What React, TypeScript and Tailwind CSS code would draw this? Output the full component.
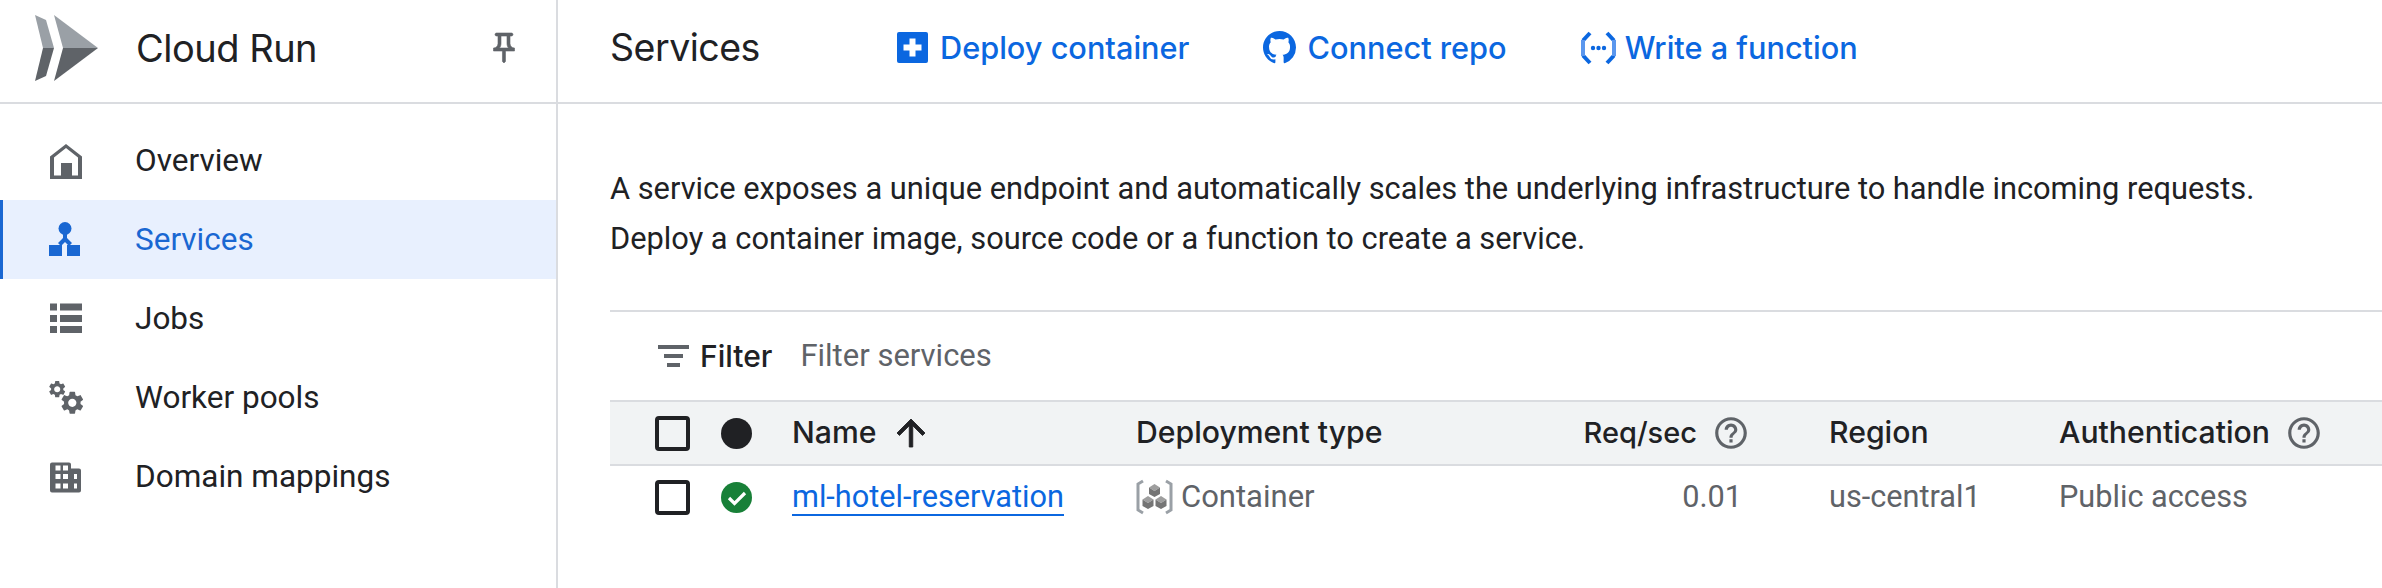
const gear = "M19.14 12.94c.04-.3.06-.61.06-.94 0-.32-.02-.64-.07-.94l2.03-1.58c.18-.14.23-.41.12-.61l-1.92-3.32c-.12-.22-.37-.29-.59-.22l-2.39.96c-.5-.38-1.03-.7-1.62-.94l-.36-2.54c-.04-.24-.24-.41-.48-.41h-3.84c-.24 0-.43.17-.47.41l-.36 2.54c-.59.24-1.13.57-1.62.94l-2.39-.96c-.22-.08-.47 0-.59.22L2.74 8.87c-.12.21-.08.47.12.61l2.03 1.58c-.05.3-.09.63-.09.94s.02.64.07.94l-2.03 1.58c-.18.14-.23.41-.12.61l1.92 3.32c.12.22.37.29.59.22l2.39-.96c.5.38 1.03.7 1.62.94l.36 2.54c.05.24.24.41.48.41h3.84c.24 0 .44-.17.47-.41l.36-2.54c.59-.24 1.13-.56 1.62-.94l2.39.96c.22.08.47 0 .59-.22l1.92-3.32c.12-.22.07-.47-.12-.61l-2.01-1.58zM12 15.6c-1.98 0-3.6-1.62-3.6-3.6s1.62-3.6 3.6-3.6 3.6 1.62 3.6 3.6-1.62 3.6-3.6 3.6z";

const Logo = () => (
  <svg width="70" height="70" viewBox="30 13 70 70" className="shrink-0">
    <path d="M35 15 46 20 54 48H43Z" fill="#9aa0a6" />
    <path d="M43 48H54L46 76 35 81Z" fill="#5f6368" />
    <path d="M54 15 98 48H63Z" fill="#9aa0a6" />
    <path d="M63 48H98L54 81Z" fill="#5f6368" />
  </svg>
);

const HomeIcon = () => (
  <svg width="36" height="36" viewBox="0 0 36 36">
    <path fillRule="evenodd" fill="#5f6368" d="M17 1 33 13.5V36H1V13.5ZM17 5 5 14.5V32.5H12V20H23V32.5H29V14.5Z" />
  </svg>
);

const ServicesIcon = () => (
  <svg width="36" height="36" viewBox="0 0 36 36" fill="#1967d2">
    <circle cx="16" cy="6.5" r="6.5" />
    <path d="M14 11h4v5l5 5-3 3-4-4-4 4-3-3 5-5z" />
    <rect x="0" y="23" width="13" height="11" />
    <rect x="18" y="23" width="13" height="11" />
  </svg>
);

const JobsIcon = () => (
  <svg width="36" height="36" viewBox="0 0 36 36" fill="#5f6368">
    <rect x="1" y="2.5" width="7" height="7" />
    <rect x="11" y="2.5" width="22" height="7" />
    <rect x="1" y="14" width="7" height="7" />
    <rect x="11" y="14" width="22" height="7" />
    <rect x="1" y="25" width="7" height="7" />
    <rect x="11" y="25" width="22" height="7" />
  </svg>
);

const WorkerIcon = () => (
  <svg width="36" height="36" viewBox="0 0 36 36" fill="#5f6368">
    <path d={gear} transform="translate(-2 -1) scale(0.85)" />
    <path d={gear} transform="translate(9.5 9) scale(1.15)" />
  </svg>
);

const DomainIcon = () => (
  <svg width="36" height="36" viewBox="0 0 36 36">
    <path fill="#5f6368" d="M3 3.5H20Q22 3.5 22 5.5V9.5H30Q32 9.5 32 11.5V31.5Q32 33.5 30 33.5H3Q1 33.5 1 31.5V5.5Q1 3.5 3 3.5Z" />
    <g fill="#fff">
      <rect x="6.5" y="6.5" width="5" height="5" />
      <rect x="14" y="6.5" width="5" height="5" />
      <rect x="6.5" y="15" width="5" height="5" />
      <rect x="14" y="15" width="5" height="5" />
      <rect x="6.5" y="24.5" width="5" height="5" />
      <rect x="14" y="24.5" width="5" height="5" />
      <rect x="25" y="15" width="3" height="5" />
      <rect x="25" y="24.5" width="3" height="5" />
    </g>
  </svg>
);

const PinIcon = () => (
  <svg width="36" height="36" viewBox="0 0 24 24" fill="#5f6368" stroke="#5f6368" strokeWidth="0.4">
    <path d="M14 4v5c0 1.12.37 2.16 1 3H9c.65-.86 1-1.9 1-3V4h4m3-2H7c-.55 0-1 .45-1 1s.45 1 1 1h1v5c0 1.66-1.34 3-3 3v2h5.97v7l1 1 1-1v-7H19v-2c-1.66 0-3-1.34-3-3V4h1c.55 0 1-.45 1-1s-.45-1-1-1z" />
  </svg>
);

const PlusBox = () => (
  <svg width="31" height="31" viewBox="0 0 31 31">
    <rect width="31" height="31" rx="2" fill="#0b67e0" />
    <path d="M12.5 6.5h6v6h6v6h-6v6h-6v-6h-6v-6h6z" fill="#fff" />
  </svg>
);

const GithubIcon = () => (
  <svg width="33" height="33" viewBox="0 0 16 16" fill="#0b67e0">
    <path d="M8 0C3.58 0 0 3.58 0 8c0 3.54 2.29 6.53 5.47 7.59.4.07.55-.17.55-.38 0-.19-.01-.82-.01-1.49-2.01.37-2.53-.49-2.69-.94-.09-.23-.48-.94-.82-1.13-.28-.15-.68-.52-.01-.53.63-.01 1.08.58 1.23.82.72 1.21 1.87.87 2.33.66.07-.52.28-.87.51-1.07-1.78-.2-3.64-.89-3.64-3.95 0-.87.31-1.59.82-2.15-.08-.2-.36-1.02.08-2.12 0 0 .67-.21 2.2.82.64-.18 1.32-.27 2-.27.68 0 1.36.09 2 .27 1.53-1.04 2.2-.82 2.2-.82.44 1.1.16 1.92.08 2.12.51.56.82 1.27.82 2.15 0 3.07-1.87 3.75-3.65 3.95.29.25.54.73.54 1.48 0 1.07-.01 1.93-.01 2.2 0 .21.15.46.55.38A8.013 8.013 0 0016 8c0-4.42-3.58-8-8-8z" />
  </svg>
);

const FunctionIcon = () => (
  <svg width="38" height="36" viewBox="0 0 38 36" fill="none" strokeWidth="4">
    <path d="M11 3 4 10.5" stroke="#0b67e0" />
    <path d="M4 25.5 11 33" stroke="#0b67e0" />
    <path d="M4 10V26" stroke="#5b97ee" />
    <path d="M28 3 35 10.5" stroke="#0b67e0" />
    <path d="M35 25.5 28 33" stroke="#0b67e0" />
    <path d="M35 10V26" stroke="#5b97ee" />
    <g fill="#0b67e0" stroke="none">
      <circle cx="14" cy="18" r="2.2" />
      <circle cx="19.5" cy="18" r="2.2" />
      <circle cx="25" cy="18" r="2.2" />
    </g>
  </svg>
);

const FilterIcon = () => (
  <svg width="36" height="36" viewBox="0 0 36 36" fill="#5f6368">
    <rect x="2" y="7" width="31" height="4" />
    <rect x="8" y="16" width="19" height="4" />
    <rect x="11" y="25" width="13" height="4" />
  </svg>
);

const HelpIcon = () => (
  <svg width="38" height="38" viewBox="0 0 24 24" fill="#5f6368">
    <path d="M11 18h2v-2h-2v2zm1-16C6.48 2 2 6.48 2 12s4.48 10 10 10 10-4.48 10-10S17.52 2 12 2zm0 18c-4.41 0-8-3.59-8-8s3.59-8 8-8 8 3.59 8 8-3.59 8-8 8zm0-14c-2.21 0-4 1.79-4 4h2c0-1.1.9-2 2-2s2 .9 2 2c0 2-3 1.75-3 5h2c0-2.25 3-2.5 3-5 0-2.21-1.79-4-4-4z" />
  </svg>
);

const ContainerIcon = () => (
  <svg width="37" height="36" viewBox="0 0 37 36">
    <path d="M7 2 2 5V31L7 34" fill="none" stroke="#9aa0a6" strokeWidth="3" />
    <path d="M30 2 35 5V31L30 34" fill="none" stroke="#9aa0a6" strokeWidth="3" />
    <path d="M18.5 5 24 8.5 18.5 12 13 8.5Z" fill="#9e9e9e" />
    <path d="M13 8.5 18.5 12V18L13 15Z M24 8.5 18.5 12V18L24 15Z" fill="#757575" />
    <path d="M12 17 17.5 20.5 12 24 6.5 20.5Z" fill="#9e9e9e" />
    <path d="M6.5 20.5 12 24V30L6.5 27Z M17.5 20.5 12 24V30L17.5 27Z" fill="#757575" />
    <path d="M25 17 30.5 20.5 25 24 19.5 20.5Z" fill="#9e9e9e" />
    <path d="M19.5 20.5 25 24V30L19.5 27Z M30.5 20.5 25 24V30L30.5 27Z" fill="#757575" />
  </svg>
);

const Checkbox = () => <span className="block w-[35px] h-[35px] border-[4px] border-[#202124] rounded-[4px]" />;

const navItems = [
  { label: "Overview", icon: <HomeIcon /> },
  { label: "Services", icon: <ServicesIcon />, active: true },
  { label: "Jobs", icon: <JobsIcon /> },
  { label: "Worker pools", icon: <WorkerIcon /> },
  { label: "Domain mappings", icon: <DomainIcon /> },
];

const tableCols = "grid grid-cols-[66px_71px_344px_364px_250px_79px_230px_1fr] items-center pl-[45px]";

const App = () => (
  <div className="w-full h-[588px] flex bg-white overflow-hidden font-['Roboto',sans-serif] text-[#202124]">
    <aside className="w-[558px] shrink-0 border-r-2 border-[#dadce0] flex flex-col">
      <div className="h-[104px] shrink-0 border-b-2 border-[#dadce0] flex items-center pb-[6px] pl-[30px] pr-[34px]">
        <Logo />
        <span className="ml-[36px] text-[38px] font-['Inter',sans-serif] tracking-[-0.5px]">Cloud Run</span>
        <span className="ml-auto"><PinIcon /></span>
      </div>
      <nav className="pt-[17px] flex flex-col">
        {navItems.map((item) => (
          <a
            key={item.label}
            className={
              item.active
                ? "h-[79px] flex items-center pl-[46px] border-l-[3px] border-[#1967d2] bg-[#e8f0fe] text-[#1967d2] text-[31.5px]"
                : "h-[79px] flex items-center pl-[46px] border-l-[3px] border-transparent text-[31.5px]"
            }
          >
            {item.icon}
            <span className="ml-[50px]">{item.label}</span>
          </a>
        ))}
      </nav>
    </aside>
    <main className="flex-1 min-w-0 flex flex-col">
      <header className="h-[104px] shrink-0 border-b-2 border-[#dadce0] flex items-center pb-[6px] pl-[52px]">
        <h1 className="w-[287px] text-[37.5px] font-normal font-['Inter',sans-serif] tracking-[-0.5px]">Services</h1>
        <a className="flex items-center text-[30.7px] font-medium text-[#0b67e0] font-['Inter',sans-serif]">
          <PlusBox />
          <span className="ml-[12px]">Deploy container</span>
        </a>
        <a className="ml-[74px] flex items-center text-[30.7px] font-medium text-[#0b67e0] font-['Inter',sans-serif]">
          <GithubIcon />
          <span className="ml-[11px]">Connect repo</span>
        </a>
        <a className="ml-[72px] flex items-center text-[30.7px] font-medium text-[#0b67e0] font-['Inter',sans-serif]">
          <FunctionIcon />
          <span className="ml-[8px]">Write a function</span>
        </a>
      </header>
      <div className="pl-[52px] pt-[60px]">
        <p className="text-[30.8px] leading-[50px]">
          A service exposes a unique endpoint and automatically scales the underlying infrastructure to handle incoming requests.
          <br />
          Deploy a container image, source code or a function to create a service.
        </p>
        <div className="mt-[46px] border-t-2 border-[#dadce0]">
          <div className="h-[88px] flex items-center pl-[46px] text-[31px]">
            <FilterIcon />
            <span className="ml-[8px] text-[30px] font-medium font-['Inter',sans-serif]">Filter</span>
            <span className="ml-[28px] text-[#5f6368]">Filter services</span>
          </div>
          <div className={tableCols + " h-[66px] bg-[#f1f3f4] border-y-2 border-[#dadce0] text-[30.2px] font-medium font-['Inter',sans-serif]"}>
            <Checkbox />
            <span className="block w-[31px] h-[31px] rounded-full bg-[#202124]" />
            <span className="flex items-center">
              Name
              <svg width="42" height="42" viewBox="0 0 24 24" fill="#202124" stroke="#202124" strokeWidth="0.5" className="ml-[13px]">
                <path d="M4 12l1.41 1.41L11 7.83V20h2V7.83l5.58 5.59L20 12l-8-8-8 8z" />
              </svg>
            </span>
            <span>Deployment type</span>
            <span className="flex items-center justify-end gap-[15px] text-[29px]">Req/sec <HelpIcon /></span>
            <span />
            <span>Region</span>
            <span className="flex items-center gap-[15px]">Authentication <HelpIcon /></span>
          </div>
          <div className={tableCols + " h-[62px] text-[30.7px] text-[#5f6368]"}>
            <Checkbox />
            <svg width="31" height="31" viewBox="0 0 31 31">
              <circle cx="15.5" cy="15.5" r="15.5" fill="#188038" />
              <path d="M8 16l5.5 5.5L24 11" fill="none" stroke="#fff" strokeWidth="3.2" />
            </svg>
            <a className="justify-self-start text-[#0b67e0] border-b-2 border-[#0b67e0] leading-[35px]">ml-hotel-reservation</a>
            <span className="flex items-center gap-[8px] text-[31px]"><ContainerIcon />Container</span>
            <span className="text-right pr-[8px]">0.01</span>
            <span />
            <span>us-central1</span>
            <span>Public access</span>
          </div>
        </div>
      </div>
    </main>
  </div>
);

export default App;
